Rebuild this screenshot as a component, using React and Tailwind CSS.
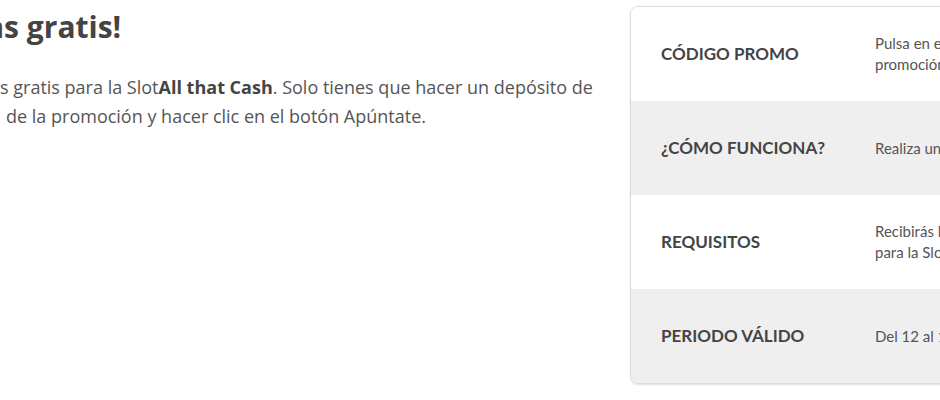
import React from 'react';

const rows = [
    { label: 'CÓDIGO PROMO', lines: ['Pulsa en el botón Apúntate de la página de la', 'promoción para participar.'], gray: false },
    { label: '¿CÓMO FUNCIONA?', lines: ['Realiza un depósito mínimo de 20€ y juega.'], gray: true },
    { label: 'REQUISITOS', lines: ['Recibirás las tiradas gratis en tu cuenta', 'para la Slot All that Cash.'], gray: false },
    { label: 'PERIODO VÁLIDO', lines: ['Del 12 al 18 de junio.'], gray: true },
];

const App = () => {
    return (
        <div className="w-[940px] h-[400px] overflow-hidden bg-white flex font-['Open_Sans',sans-serif] text-[#555]">
            {/* Left column */}
            <div className="w-[630px] flex-shrink-0 overflow-hidden">
                <h1 className="ml-[-14px] mt-[7px] text-[30px] leading-[40px] font-bold text-[#444] whitespace-nowrap">as gratis!</h1>
                <div className="mt-[26px] text-[18px] leading-[29px] whitespace-nowrap">
                    <p>s gratis para la Slot<b className="text-[#444]">All that Cash</b>. Solo tienes que hacer un depósito de</p>
                    <p className="pl-[6px]">de la promoción y hacer clic en el botón Apúntate.</p>
                </div>
            </div>

            {/* Promo table */}
            <div className="pt-[6px] flex-shrink-0">
                <div className="w-[520px] border border-[#dcdcdc] rounded-lg overflow-hidden shadow-[0_1px_2px_rgba(0,0,0,0.12)]">
                    {rows.map((row, i) => (
                        <div key={i} className={`flex items-center h-[94px] ${row.gray ? 'bg-[#efefef]' : 'bg-white'}`}>
                            <div className="w-[244px] flex-shrink-0 pl-[30px] font-['Lato',sans-serif] text-[17px] font-bold text-[#444] whitespace-nowrap">{row.label}</div>
                            <div className="font-['Lato',sans-serif] text-[15px] leading-[21px] whitespace-nowrap">
                                {row.lines.map((l, j) => <div key={j}>{l}</div>)}
                            </div>
                        </div>
                    ))}
                </div>
            </div>
        </div>
    );
};

export default App;
